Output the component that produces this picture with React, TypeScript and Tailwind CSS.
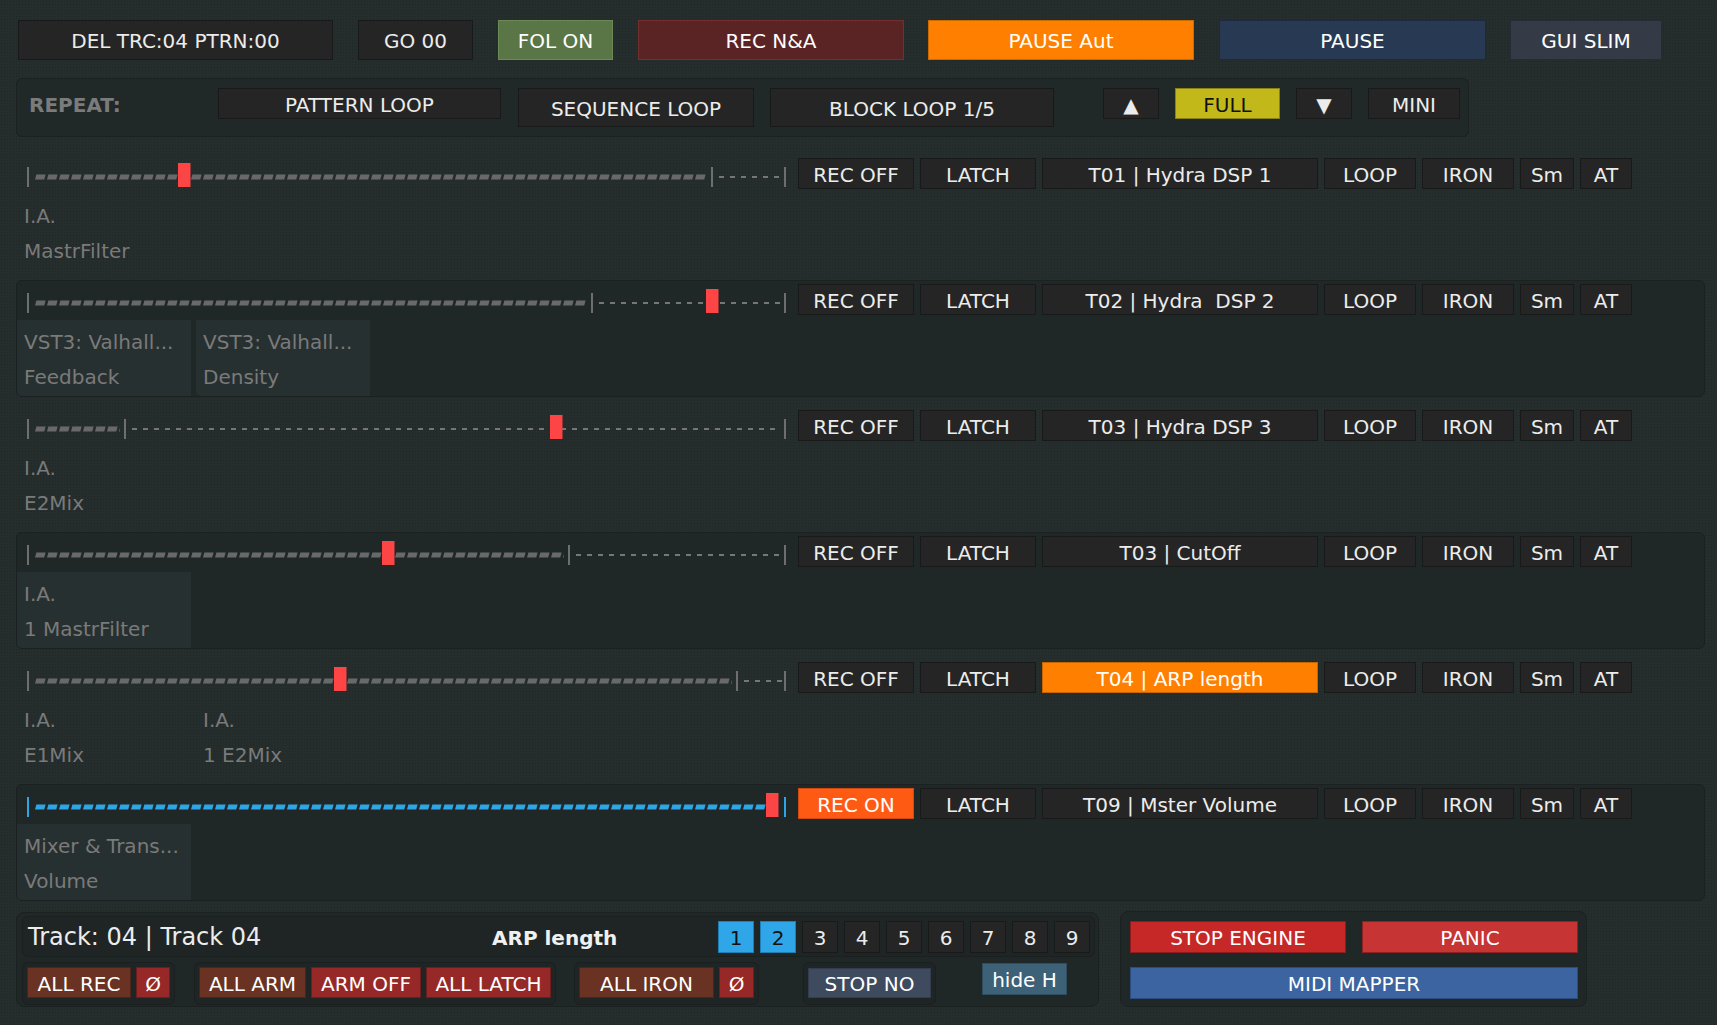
import React from 'react';

type TrackRow = {
  rec: 'off' | 'on';
  name: string;
  nameActive?: boolean;
  rangeEnd: number;
  thumb: number;
  blue?: boolean;
  panel?: boolean;
  cells: [string, string][];
};

const rows: TrackRow[] = [
  { rec: 'off', name: 'T01 | Hydra DSP 1', rangeEnd: 711, thumb: 184, cells: [['I.A.', 'MastrFilter']] },
  {
    rec: 'off',
    name: 'T02 | Hydra  DSP 2',
    rangeEnd: 591,
    thumb: 712,
    panel: true,
    cells: [
      ['VST3: Valhall...', 'Feedback'],
      ['VST3: Valhall...', 'Density'],
    ],
  },
  { rec: 'off', name: 'T03 | Hydra DSP 3', rangeEnd: 124, thumb: 556, cells: [['I.A.', 'E2Mix']] },
  { rec: 'off', name: 'T03 | CutOff', rangeEnd: 568, thumb: 388, panel: true, cells: [['I.A.', '1 MastrFilter']] },
  {
    rec: 'off',
    name: 'T04 | ARP length',
    nameActive: true,
    rangeEnd: 736,
    thumb: 340,
    cells: [
      ['I.A.', 'E1Mix'],
      ['I.A.', '1 E2Mix'],
    ],
  },
  { rec: 'on', name: 'T09 | Mster Volume', rangeEnd: 784, thumb: 772, blue: true, panel: true, cells: [['Mixer & Trans...', 'Volume']] },
];

const base = 'flex items-center justify-center whitespace-pre leading-none shrink-0 border pt-[2px]';
const gray = 'border-[#181a1a] bg-[#252525] text-[#ececec]';

// custom-drawn automation slider (ticks, dashed fill, dotted rest, thumb)
function Slider({ id, rangeEnd, thumb, blue }: { id: string; rangeEnd: number; thumb: number; blue?: boolean }) {
  const fill = blue ? '#2ea6e6' : '#696969';
  const tick = blue ? '#2ea6e6' : '#6e6e6e';
  const re = rangeEnd - 26;
  const th = thumb - 26;
  const thickEnd = blue ? th - 6 : re - 4;
  const dots: number[] = [];
  if (!blue) for (let x = re + 8; x + 5 <= 756; x += 11) dots.push(x);

  return (
    <svg width="762" height="27" className="mt-[4px] ml-[9px] shrink-0">
      <defs>
        <pattern id={id} x="9" y="0" width="12" height="27" patternUnits="userSpaceOnUse">
          <polygon points="0,17.6 9.2,17.6 10.6,12.4 1.4,12.4" fill={fill} />
        </pattern>
      </defs>
      <rect x="1" y="5" width="2" height="20" fill={tick} />
      <rect x="9" y="12" width={thickEnd - 9} height="6" fill={`url(#${id})`} />
      {!blue && <rect x={re} y="5" width="2" height="20" fill="#6e6e6e" />}
      {dots.map((x) => (
        <rect key={x} x={x} y="14" width="5" height="2" fill="#767676" />
      ))}
      <rect x="758" y="5" width="2" height="20" fill={tick} />
      <rect x={th - 6} y="1" width="12.5" height="24" fill="#fd4545" />
    </svg>
  );
}

function Row({ row, i }: { row: TrackRow; i: number }) {
  return (
    <div
      className={
        row.panel
          ? 'flex h-[117px] flex-col rounded-[6px] border border-[#1b2121] bg-[#202727]'
          : 'flex h-[117px] flex-col rounded-[6px] border border-transparent'
      }
    >
      <div className="flex h-[39px] items-start pt-[3px]">
        <Slider id={`fill-${i}`} rangeEnd={row.rangeEnd} thumb={row.thumb} blue={row.blue} />
        <div className="ml-[10px] flex gap-[6px]">
          {row.rec === 'on' ? (
            <div className={`${base} h-[31px] w-[116px] border-[#d04a10] bg-[#ff5a14] text-white`}>REC ON</div>
          ) : (
            <div className={`${base} ${gray} h-[31px] w-[116px]`}>REC OFF</div>
          )}
          <div className={`${base} ${gray} h-[31px] w-[116px]`}>LATCH</div>
          {row.nameActive ? (
            <div className={`${base} h-[31px] w-[276px] border-[#c86400] bg-[#ff8000] text-white`}>{row.name}</div>
          ) : (
            <div className={`${base} ${gray} h-[31px] w-[276px]`}>{row.name}</div>
          )}
          <div className={`${base} ${gray} h-[31px] w-[92px]`}>LOOP</div>
          <div className={`${base} ${gray} h-[31px] w-[92px]`}>IRON</div>
          <div className={`${base} ${gray} h-[31px] w-[54px]`}>Sm</div>
          <div className={`${base} ${gray} h-[31px] w-[52px]`}>AT</div>
        </div>
      </div>
      <div className="flex flex-1 gap-[5px]">
        {row.cells.map(([a, b], k) => (
          <div
            key={k}
            className={
              row.panel
                ? 'w-[174px] whitespace-pre rounded-bl-[5px] bg-[#273030] pl-[7px] pt-[5px] leading-[35px] text-[#7a7a7a]'
                : 'w-[174px] whitespace-pre pl-[7px] pt-[5px] leading-[35px] text-[#7a7a7a]'
            }
          >
            <div>{a}</div>
            <div>{b}</div>
          </div>
        ))}
      </div>
    </div>
  );
}

export default function App() {
  return (
    <div className="h-[1025px] w-[1717px] overflow-hidden bg-[#252d2d] bg-[radial-gradient(#1f2626_1px,transparent_1px)] bg-[length:3px_3px] font-['DejaVu_Sans',sans-serif] text-[20px] text-[#ececec]">
      {/* top transport row */}
      <div className="flex pl-[18px] pt-[20px]">
        <div className={`${base} ${gray} h-[40px] w-[315px]`}>DEL TRC:04 PTRN:00</div>
        <div className={`${base} ${gray} ml-[25px] h-[40px] w-[115px]`}>GO 00</div>
        <div className={`${base} ml-[25px] h-[40px] w-[115px] border-[#6b8a55] bg-[#5a7546] text-white`}>FOL ON</div>
        <div className={`${base} ml-[25px] h-[40px] w-[266px] border-[#732e2e] bg-[#5b2424] text-white`}>REC N&amp;A</div>
        <div className={`${base} ml-[24px] h-[40px] w-[266px] border-[#cc6a00] bg-[#ff8000] text-white`}>PAUSE Aut</div>
        <div className={`${base} ml-[25px] h-[40px] w-[267px] border-[#1c2a3e] bg-[#283a53] text-white`}>PAUSE</div>
        <div className={`${base} ml-[24px] h-[40px] w-[152px] border-[#262c35] bg-[#343b47] text-white`}>GUI SLIM</div>
      </div>

      {/* repeat panel */}
      <div className="ml-[16px] mt-[18px] flex h-[59px] w-[1453px] items-start rounded-[6px] border border-[#1b2121] bg-[#212828] pl-[12px] pt-[9px]">
        <div className="flex h-[31px] w-[189px] shrink-0 items-center pt-[2px] font-bold text-[#7b7b7b]">REPEAT:</div>
        <div className={`${base} ${gray} h-[31px] w-[283px]`}>PATTERN LOOP</div>
        <div className={`${base} ${gray} ml-[17px] h-[39px] w-[236px]`}>SEQUENCE LOOP</div>
        <div className={`${base} ${gray} ml-[16px] h-[39px] w-[284px]`}>BLOCK LOOP 1/5</div>
        <div className={`${base} ${gray} ml-[49px] h-[31px] w-[56px] text-[#dcdcdc]`}>▲</div>
        <div className={`${base} ml-[16px] h-[31px] w-[105px] border-[#8a8212] bg-[#c3b81a] text-[#111]`}>FULL</div>
        <div className={`${base} ${gray} ml-[16px] h-[31px] w-[56px] text-[#dcdcdc]`}>▼</div>
        <div className={`${base} ${gray} ml-[16px] h-[31px] w-[92px]`}>MINI</div>
      </div>

      {/* automation tracks */}
      <div className="ml-[16px] mt-[17px] flex w-[1689px] flex-col gap-[9px]">
        {rows.map((r, i) => (
          <Row key={i} row={r} i={i} />
        ))}
      </div>

      {/* bottom panels */}
      <div className="mt-[10px] flex items-start">
        <div className="ml-[16px] mt-[1px] h-[95px] w-[1083px] rounded-[8px] border border-[#1b2121] bg-[#202727] pl-[5px] pt-[3px]">
          <div className="flex h-[41px] w-[1073px] items-center rounded-[6px] border border-[#1a1f1f] bg-[#1f2525] pl-[5px]">
            <div className="w-[464px] shrink-0 pt-[1px] text-[24px] text-[#ececec]">Track: 04 | Track 04</div>
            <div className="w-[226px] shrink-0 pt-[2px] font-bold text-[#f0f0f0]">ARP length</div>
            <div className="flex gap-[6px]">
              {['1', '2', '3', '4', '5', '6', '7', '8', '9'].map((n) =>
                n === '1' || n === '2' ? (
                  <div key={n} className={`${base} h-[32px] w-[36px] border-[#1f7fb4] bg-[#2ea6e8] text-[#111]`}>
                    {n}
                  </div>
                ) : (
                  <div key={n} className={`${base} ${gray} h-[32px] w-[36px]`}>
                    {n}
                  </div>
                ),
              )}
            </div>
          </div>
          <div className="mt-[5px] flex items-start">
            <div className="flex h-[43px] gap-[5px] rounded-[6px] border border-[#1a1f1f] bg-[#1f2525] p-[4px]">
              <div className={`${base} h-[31px] w-[104px] border-[#4f2418] bg-[#693222] text-white`}>ALL REC</div>
              <div className={`${base} h-[31px] w-[34px] border-[#6e1c1c] bg-[#962828] text-white`}>Ø</div>
            </div>
            <div className="ml-[19px] flex h-[43px] gap-[5px] rounded-[6px] border border-[#1a1f1f] bg-[#1f2525] p-[4px]">
              <div className={`${base} h-[31px] w-[107px] border-[#4f2418] bg-[#693222] text-white`}>ALL ARM</div>
              <div className={`${base} h-[31px] w-[110px] border-[#6e1c1c] bg-[#962828] text-white`}>ARM OFF</div>
              <div className={`${base} h-[31px] w-[125px] border-[#6e1c1c] bg-[#962828] text-white`}>ALL LATCH</div>
            </div>
            <div className="ml-[18px] flex h-[43px] gap-[5px] rounded-[6px] border border-[#1a1f1f] bg-[#1f2525] p-[4px]">
              <div className={`${base} h-[31px] w-[135px] border-[#4f2418] bg-[#693222] text-white`}>ALL IRON</div>
              <div className={`${base} h-[31px] w-[35px] border-[#6e1c1c] bg-[#962828] text-white`}>Ø</div>
            </div>
            <div className="ml-[44px] flex h-[43px] rounded-[6px] border border-[#1a1f1f] bg-[#1f2525] px-[4px] pt-[5px]">
              <div className={`${base} h-[30px] w-[123px] border-[#333d4d] bg-[#3e4a5e] text-white`}>STOP NO</div>
            </div>
            <div className={`${base} ml-[46px] mt-[1px] h-[32px] w-[85px] border-[#304d5f] bg-[#3d6177] text-white`}>hide H</div>
          </div>
        </div>

        <div className="ml-[21px] h-[96px] w-[467px] rounded-[8px] border border-[#1b2121] bg-[#202727] p-[9px]">
          <div className="flex gap-[16px]">
            <div className={`${base} h-[32px] w-[216px] border-[#8e1c1c] bg-[#c62828] text-white`}>STOP ENGINE</div>
            <div className={`${base} h-[32px] w-[216px] border-[#8e2222] bg-[#c63434] text-white`}>PANIC</div>
          </div>
          <div className={`${base} mt-[14px] h-[32px] w-[448px] border-[#2b4c7e] bg-[#3c64a0] text-white`}>MIDI MAPPER</div>
        </div>
      </div>
    </div>
  );
}
